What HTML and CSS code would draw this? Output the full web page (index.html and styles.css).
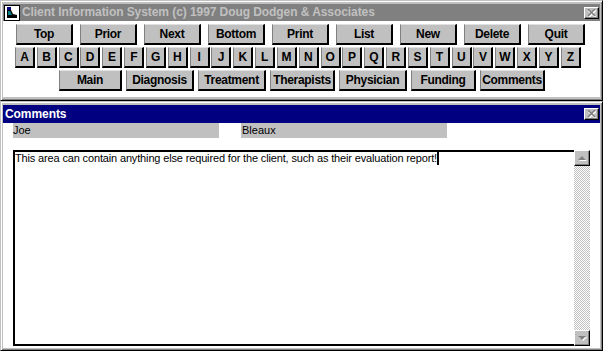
FILE: index.html
```html
<!DOCTYPE html>
<html lang="en">
<head>
    <meta charset="UTF-8">
    <title>Client Information System</title>
    <link rel="stylesheet" href="styles.css">
</head>
<body>

<!-- Main navigation window (inactive) -->
<div class="window">
    <div class="title-bar inactive">
        <svg class="app-icon" width="16" height="16" viewBox="0 0 16 16">
            <rect x="0.5" y="0.5" width="15" height="15" fill="#fff" stroke="#000"/>
            <rect x="3" y="2" width="4" height="3" fill="#000080"/>
            <path d="M3 5 L7 5 L9 9 L13 10 L13 13 L3 13 Z" fill="#000"/>
            <path d="M4 6 L6 6 L8 10 L4 10 Z" fill="#008080"/>
        </svg>
        <span class="title-text">Client Information System (c) 1997 Doug Dodgen &amp; Associates</span>
        <span class="close-btn">
            <svg width="9" height="8" viewBox="0 0 9 8">
                <path d="M1 1 L8 8 M8 1 L1 8" stroke="#fff" stroke-width="1.6" transform="translate(0.6,0.4)"/>
                <path d="M1 0 L8 7 M8 0 L1 7" stroke="#808080" stroke-width="1.6"/>
            </svg>
        </span>
    </div>
    <div class="nav-body">
        <div class="nav-row">
            <button class="btn">Top</button>
            <button class="btn">Prior</button>
            <button class="btn">Next</button>
            <button class="btn">Bottom</button>
            <button class="btn">Print</button>
            <button class="btn">List</button>
            <button class="btn">New</button>
            <button class="btn">Delete</button>
            <button class="btn">Quit</button>
        </div>
        <div class="letter-row">
            <button class="btn letter">A</button>
            <button class="btn letter">B</button>
            <button class="btn letter">C</button>
            <button class="btn letter">D</button>
            <button class="btn letter">E</button>
            <button class="btn letter">F</button>
            <button class="btn letter">G</button>
            <button class="btn letter">H</button>
            <button class="btn letter">I</button>
            <button class="btn letter">J</button>
            <button class="btn letter">K</button>
            <button class="btn letter">L</button>
            <button class="btn letter">M</button>
            <button class="btn letter">N</button>
            <button class="btn letter">O</button>
            <button class="btn letter">P</button>
            <button class="btn letter">Q</button>
            <button class="btn letter">R</button>
            <button class="btn letter">S</button>
            <button class="btn letter">T</button>
            <button class="btn letter">U</button>
            <button class="btn letter">V</button>
            <button class="btn letter">W</button>
            <button class="btn letter">X</button>
            <button class="btn letter">Y</button>
            <button class="btn letter">Z</button>
        </div>
        <div class="section-row">
            <button class="btn sec-main">Main</button>
            <button class="btn sec-wide">Diagnosis</button>
            <button class="btn sec-wide">Treatment</button>
            <button class="btn">Therapists</button>
            <button class="btn sec-wide">Physician</button>
            <button class="btn">Funding</button>
            <button class="btn">Comments</button>
        </div>
    </div>
</div>

<!-- Comments window (active) -->
<div class="window comments-window">
    <div class="title-bar active">
        <span class="title-text">Comments</span>
        <span class="close-btn">
            <svg width="9" height="8" viewBox="0 0 9 8">
                <path d="M1 1 L8 8 M8 1 L1 8" stroke="#fff" stroke-width="1.6" transform="translate(0.6,0.4)"/>
                <path d="M1 0 L8 7 M8 0 L1 7" stroke="#808080" stroke-width="1.6"/>
            </svg>
        </span>
    </div>
    <div class="comments-body">
        <div class="name-row">
            <div class="field">Joe</div>
            <div class="field">Bleaux</div>
        </div>
        <div class="memo">
            <div class="memo-text">This area can contain anything else required for the client, such as their evaluation report!<span class="caret"></span></div>
            <div class="scrollbar">
                <div class="scroll-btn"><span class="arrow up"></span></div>
                <div class="scroll-track"></div>
                <div class="scroll-btn"><span class="arrow down"></span></div>
            </div>
        </div>
    </div>
</div>

</body>
</html>
```

FILE: styles.css
```css
body {
    margin: 0;
    padding: 0;
    background-color: #fff;
    font-family: "Liberation Sans", Arial, sans-serif;
    font-size: 11px;
}

/* Window frame */
.window {
    width: 603px;
    box-sizing: border-box;
    background-color: #c0c0c0;
    border: 1px solid;
    border-color: #c0c0c0 #000 #000 #c0c0c0;
    box-shadow: inset 1px 1px 0 #fff, inset -1px -1px 0 #808080;
    padding: 3px 2px 3px 2px;
}

.title-bar {
    display: flex;
    align-items: center;
    height: 17px;
    padding-left: 1px;
    padding-right: 1px;
}

.title-bar.inactive {
    background-color: #808080;
    color: #c0c0c0;
}

.title-bar.active {
    background-color: #000080;
    color: #fff;
    padding-left: 2px;
    height: 18px;
}

.app-icon {
    margin-right: 2px;
}

.title-text {
    font-weight: bold;
    font-size: 12px;
    line-height: 17px;
    letter-spacing: -0.07px;
}

.close-btn {
    margin-left: auto;
    width: 15px;
    height: 12px;
    box-sizing: border-box;
    background-color: #c0c0c0;
    border: 1px solid;
    border-color: #fff #000 #000 #fff;
    box-shadow: inset -1px -1px 0 #808080;
    display: flex;
    align-items: center;
    justify-content: center;
}

/* Navigation buttons */
.nav-body {
    background-color: #fff;
    padding: 3px 0 6px 13px;
    display: flex;
    flex-direction: column;
    gap: 2px;
}

.nav-row, .letter-row, .section-row {
    display: flex;
}

.nav-row {
    gap: 7px;
}

.letter-row {
    width: 566px;
    justify-content: space-between;
    margin-left: -1px;
}

.section-row {
    gap: 4px;
    margin-left: 43px;
}

.btn {
    font-family: "Liberation Sans", Arial, sans-serif;
    font-size: 12px;
    letter-spacing: -0.3px;
    font-weight: bold;
    color: #000;
    background-color: #c0c0c0;
    height: 21px;
    width: 57px;
    padding: 0;
    box-sizing: border-box;
    border: 1px solid #000;
    border-top-color: #e0e0e0;
    border-left-color: #808080;
    border-right-width: 2px;
    border-bottom-width: 2px;
    cursor: pointer;
}

.btn.letter {
    width: 20px;
}

.section-row .btn {
    width: 65px;
}

.section-row .btn.sec-main {
    width: 63px;
}

.section-row .btn.sec-wide {
    width: 68px;
}

/* Comments window */
.comments-window {
    padding-bottom: 2px;
}

.comments-body {
    background-color: #fff;
    height: 225px;
    padding-left: 10px;
    padding-right: 10px;
}

.name-row {
    display: flex;
    gap: 22px;
}

.field {
    width: 206px;
    height: 15px;
    line-height: 15px;
    background-color: #c0c0c0;
    color: #000;
}

.name-row .field + .field {
    padding-left: 1px;
    width: 205px;
}

.memo {
    display: flex;
    margin-top: 12px;
    height: 196px;
}

.memo-text {
    flex: 1;
    border: 2px solid #000;
    border-right: none;
    line-height: 13px;
    letter-spacing: -0.15px;
    color: #000;
}

.caret {
    display: inline-block;
    width: 2px;
    height: 13px;
    background-color: #000;
    vertical-align: top;
}

.scrollbar {
    width: 16px;
    display: flex;
    flex-direction: column;
}

.scroll-btn {
    height: 16px;
    box-sizing: border-box;
    background-color: #c0c0c0;
    border: 1px solid;
    border-color: #fff #000 #000 #fff;
    box-shadow: inset -1px -1px 0 #808080;
    display: flex;
    align-items: center;
    justify-content: center;
}

.scroll-track {
    flex: 1;
    background-color: #fff;
    background-image: conic-gradient(#fff 25%, #c0c0c0 0 50%, #fff 0 75%, #c0c0c0 0);
    background-size: 2px 2px;
}

.arrow {
    width: 0;
    height: 0;
    border-left: 4px solid transparent;
    border-right: 4px solid transparent;
}

.arrow.up {
    border-bottom: 4px solid #808080;
    filter: drop-shadow(1px 1px 0 #fff);
}

.arrow.down {
    border-top: 4px solid #808080;
    filter: drop-shadow(1px 1px 0 #fff);
}
```
